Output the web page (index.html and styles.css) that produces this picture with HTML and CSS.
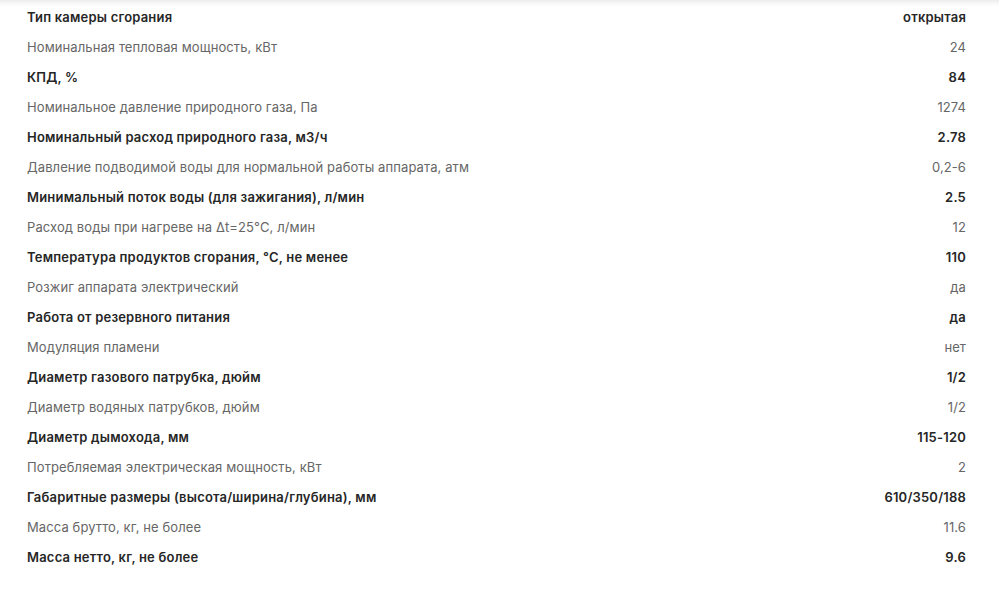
FILE: index.html
```html
<!DOCTYPE html>
<html lang="ru">
<head>
    <meta charset="UTF-8">
    <title>Характеристики</title>
    <link rel="stylesheet" href="styles.css">
</head>
<body>
    <!-- Specs table -->
    <div class="specs">
        <div class="row main"><span>Тип камеры сгорания</span><span>открытая</span></div>
        <div class="row"><span>Номинальная тепловая мощность, кВт</span><span>24</span></div>
        <div class="row main"><span>КПД, %</span><span>84</span></div>
        <div class="row"><span>Номинальное давление природного газа, Па</span><span>1274</span></div>
        <div class="row main"><span>Номинальный расход природного газа, м3/ч</span><span>2.78</span></div>
        <div class="row"><span>Давление подводимой воды для нормальной работы аппарата, атм</span><span>0,2-6</span></div>
        <div class="row main"><span>Минимальный поток воды (для зажигания), л/мин</span><span>2.5</span></div>
        <div class="row"><span>Расход воды при нагреве на Δt=25°С, л/мин</span><span>12</span></div>
        <div class="row main"><span>Температура продуктов сгорания, °С, не менее</span><span>110</span></div>
        <div class="row"><span>Розжиг аппарата электрический</span><span>да</span></div>
        <div class="row main"><span>Работа от резервного питания</span><span>да</span></div>
        <div class="row"><span>Модуляция пламени</span><span>нет</span></div>
        <div class="row main"><span>Диаметр газового патрубка, дюйм</span><span>1/2</span></div>
        <div class="row"><span>Диаметр водяных патрубков, дюйм</span><span>1/2</span></div>
        <div class="row main"><span>Диаметр дымохода, мм</span><span>115-120</span></div>
        <div class="row"><span>Потребляемая электрическая мощность, кВт</span><span>2</span></div>
        <div class="row main"><span>Габаритные размеры (высота/ширина/глубина), мм</span><span>610/350/188</span></div>
        <div class="row"><span>Масса брутто, кг, не более</span><span>11.6</span></div>
        <div class="row main"><span>Масса нетто, кг, не более</span><span>9.6</span></div>
    </div>
</body>
</html>
```

FILE: styles.css
```css
body {
    font-family: Inter, Roboto, sans-serif;
    font-size: 13px;
    background-color: #fff;
    margin: 0;
    padding: 0;
}
.specs {
    padding: 2px 33px 19px 27px;
    box-shadow: inset 0 7px 6px -6px rgba(0, 0, 0, 0.12);
}
.row {
    display: flex;
    justify-content: space-between;
    align-items: center;
    height: 30px;
    color: #666;
    letter-spacing: 0.1px;
}
.row.main {
    color: #262626;
    font-weight: 600;
    letter-spacing: 0.2px;
}
```
